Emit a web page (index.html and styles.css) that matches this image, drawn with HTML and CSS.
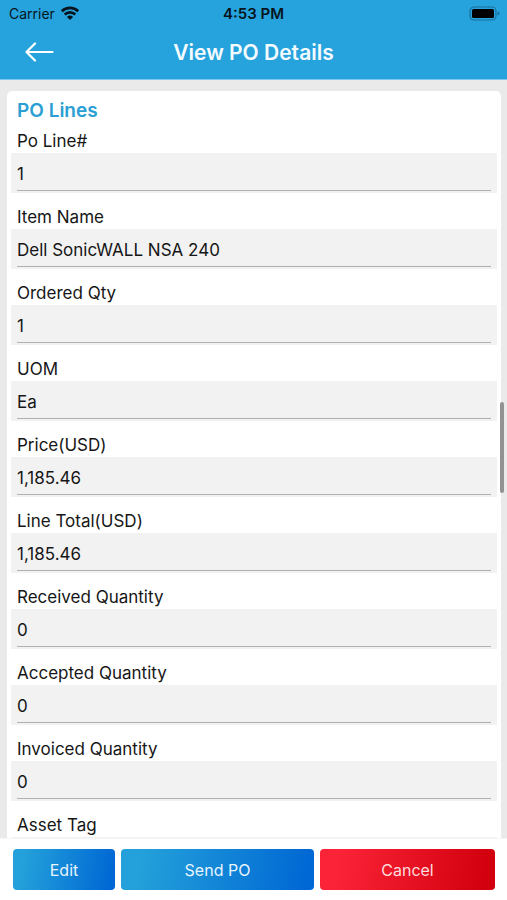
FILE: index.html
```html
<!DOCTYPE html>
<html lang="en">
<head>
<meta charset="utf-8">
<meta name="viewport" content="width=device-width, initial-scale=1">
<title>View PO Details</title>
<link rel="stylesheet" href="styles.css">
</head>
<body>
<div class="app">
  <header class="header">
    <div class="status">
      <div class="carrier">
        <span>Carrier</span>
        <svg class="wifi" width="20" height="15" viewBox="0 0 20 15" aria-hidden="true">
          <path d="M1.800 5.200a11.800 11.800 0 0 1 16.400 0M4.700 8.500a7.600 7.600 0 0 1 10.600 0" fill="none" stroke="#06141c" stroke-width="2.600"/>
          <path d="M6.900 10.900a4.500 4.500 0 0 1 6.200 0L10 14z" fill="#06141c"/>
        </svg>
      </div>
      <span class="time">4:53 PM</span>
      <svg class="battery" width="31" height="15" viewBox="0 0 31 15" aria-hidden="true">
        <rect x="1" y="1" width="26" height="13" rx="4" fill="none" stroke="#1b7199" stroke-width="1.200"/>
        <rect x="3" y="3" width="22" height="9" rx="1.500" fill="#000"/>
        <path d="M28.500 5.500q2 .6 2 2t-2 2z" fill="#1b7199"/>
      </svg>
    </div>
    <div class="nav">
      <button class="back" type="button" aria-label="Back">
        <svg width="30" height="20" viewBox="0 0 30 20" aria-hidden="true">
          <path d="M28.500 10H2.500M11 1.500L2.500 10l8.500 8.500" fill="none" stroke="#fff" stroke-width="2.200" stroke-linecap="round" stroke-linejoin="round"/>
        </svg>
      </button>
      <h1 class="title">View PO Details</h1>
    </div>
  </header>
  <main class="content">
    <section class="card">
      <h2 class="heading">PO Lines</h2>
      <div class="field"><label for="line">Po Line#</label><div class="box"><input id="line" value="1" readonly></div></div>
      <div class="field"><label for="item">Item Name</label><div class="box"><input id="item" value="Dell SonicWALL NSA 240" readonly></div></div>
      <div class="field"><label for="ordered">Ordered Qty</label><div class="box"><input id="ordered" value="1" readonly></div></div>
      <div class="field"><label for="uom">UOM</label><div class="box"><input id="uom" value="Ea" readonly></div></div>
      <div class="field"><label for="price">Price(USD)</label><div class="box"><input id="price" value="1,185.46" readonly></div></div>
      <div class="field"><label for="total">Line Total(USD)</label><div class="box"><input id="total" value="1,185.46" readonly></div></div>
      <div class="field"><label for="received">Received Quantity</label><div class="box"><input id="received" value="0" readonly></div></div>
      <div class="field"><label for="accepted">Accepted Quantity</label><div class="box"><input id="accepted" value="0" readonly></div></div>
      <div class="field"><label for="invoiced">Invoiced Quantity</label><div class="box"><input id="invoiced" value="0" readonly></div></div>
      <div class="field"><label for="asset">Asset Tag</label><div class="box"><input id="asset" readonly></div></div>
    </section>
    <div class="thumb"></div>
  </main>
  <footer class="actions">
    <button class="btn edit" type="button">Edit</button>
    <button class="btn send" type="button">Send PO</button>
    <button class="btn cancel" type="button">Cancel</button>
  </footer>
</div>
</body>
</html>
```
FILE: styles.css
```css
* {
  box-sizing: border-box;
}

body {
  margin: 0;
  font-family: Inter, "Liberation Sans", sans-serif;
  font-size: 17px;
  color: #161616;
}

.app {
  display: flex;
  flex-direction: column;
  height: 100vh;
  overflow: hidden;
}

.header {
  flex: none;
  background: #26a3dd;
  border-bottom: 1px solid #7cc8ea;
}

.status {
  display: grid;
  grid-template-columns: 1fr auto 1fr;
  align-items: center;
  height: 27px;
  padding: 0 7px;
  font-size: 14px;
  color: #06141c;
}

.carrier {
  display: flex;
  align-items: center;
  gap: 5px;
  padding-left: 2px;
}

.time {
  font-size: 15px;
  font-weight: 600;
}

.battery {
  justify-self: end;
}

.nav {
  display: grid;
  grid-template-columns: 78px 1fr 78px;
  align-items: center;
  height: 52px;
  padding-bottom: 2px;
}

.back {
  justify-self: center;
  display: flex;
  padding: 0;
  border: 0;
  background: none;
}

.title {
  margin: 0;
  font-size: 21px;
  font-weight: 600;
  text-align: center;
  color: #f4fbff;
}

.content {
  position: relative;
  flex: 1;
  min-height: 0;
  overflow: hidden;
  padding: 11px 6px 0 7px;
  background: #ebeaea;
}

.card {
  padding: 4px;
  border-radius: 5px;
  background: #fff;
}

.heading {
  margin: 0;
  padding: 0 6px;
  font-size: 19px;
  line-height: 32px;
  font-weight: 600;
  color: #2b9fd3;
}

.field {
  margin-bottom: 10px;
}

.field label {
  display: block;
  padding: 2px 6px 0;
  line-height: 24px;
}

.box {
  height: 40px;
  padding: 0 6px 2px;
  background: #f2f2f2;
}

.box input {
  display: block;
  width: 100%;
  height: 38px;
  padding: 4px 0 0;
  border: 0;
  border-bottom: 1px solid #b0b0b0;
  background: none;
  font: inherit;
  color: inherit;
  outline: 0;
}

.thumb {
  position: absolute;
  top: 36%;
  right: 3px;
  width: 4px;
  height: 12%;
  margin-top: 49px;
  border-radius: 2px;
  background: #929292;
}

.actions {
  flex: none;
  display: grid;
  grid-template-columns: 102fr 193fr 175fr;
  gap: 6px;
  padding: 10px 12px 10px 13px;
  border-top: 1px solid #f5f5f5;
  background: #fff;
}

.btn {
  height: 41px;
  padding: 0;
  border: 0;
  border-radius: 4px;
  background: linear-gradient(100deg, #24a1da 10%, #0068d4 95%);
  font: inherit;
  font-size: 16px;
  color: #e6f4ff;
}

.cancel {
  background: linear-gradient(100deg, #fb2338 10%, #d2000e 95%);
  color: #ffdcdc;
}
```
